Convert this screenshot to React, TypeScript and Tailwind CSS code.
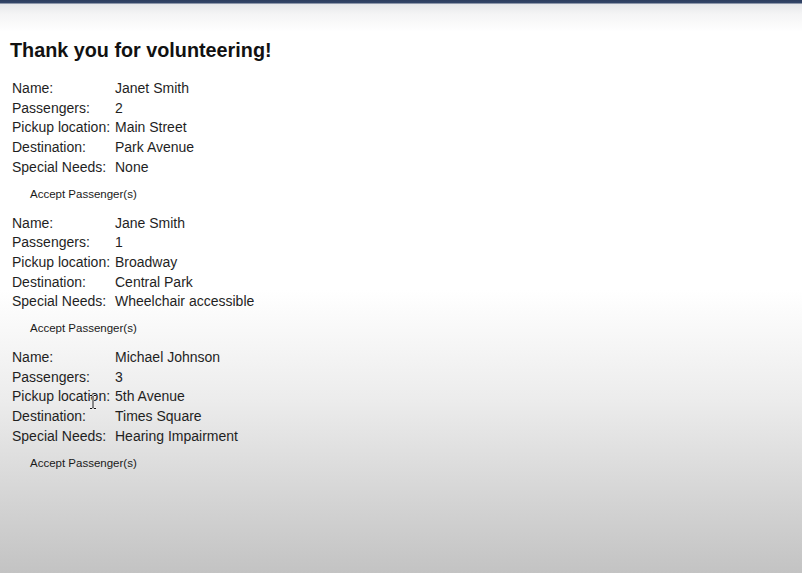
import React from 'react';

type Request = {
  name: string;
  passengers: number;
  pickup: string;
  destination: string;
  needs: string;
};

const requests: Request[] = [
  { name: 'Janet Smith', passengers: 2, pickup: 'Main Street', destination: 'Park Avenue', needs: 'None' },
  { name: 'Jane Smith', passengers: 1, pickup: 'Broadway', destination: 'Central Park', needs: 'Wheelchair accessible' },
  { name: 'Michael Johnson', passengers: 3, pickup: '5th Avenue', destination: 'Times Square', needs: 'Hearing Impairment' },
];

function RequestCard({ req, showCursor }: { req: Request; showCursor?: boolean }) {
  const rows: [string, React.ReactNode][] = [
    ['Name:', req.name],
    ['Passengers:', req.passengers],
    ['Pickup location:', req.pickup],
    ['Destination:', req.destination],
    ['Special Needs:', req.needs],
  ];

  return (
    <div className="mb-[9px]">
      <div className="relative grid grid-cols-[103px_1fr] pl-[2px] text-[14px] leading-[19.7px] text-[#1f1f1f]">
        {rows.map(([label, value]) => (
          <React.Fragment key={label}>
            <div className="whitespace-nowrap">{label}</div>
            <div>{value}</div>
          </React.Fragment>
        ))}
        {/* text cursor over the label */}
        {showCursor && (
          <svg className="absolute left-[78px] top-[46px]" width="10" height="16" viewBox="0 0 10 16">
            <path d="M2 1.5h2l1 1 1-1h2M5 2.5v11M2 14.5h2l1-1 1 1h2" fill="none" stroke="#fff" strokeWidth="2.2" />
            <path d="M2 1.5h2l1 1 1-1h2M5 2.5v11M2 14.5h2l1-1 1 1h2" fill="none" stroke="#111" strokeWidth="1" />
          </svg>
        )}
      </div>
      <button className="ml-[14px] mt-[6px] px-[6px] py-[3px] text-[11.5px] leading-[14px] text-[#1a1a1a]">
        Accept Passenger(s)
      </button>
    </div>
  );
}

export default function App() {
  return (
    <div
      className="min-h-screen w-full bg-[linear-gradient(to_bottom,#2c3d5e_0px,#34466a_3px,#e6e7ea_4px,#f4f4f5_14px,#ffffff_32px,#ffffff_290px,#ececec_400px,#d9d9d9_480px,#c3c3c3_573px)]"
      style={{ fontFamily: '"Liberation Sans", Arial, Helvetica, sans-serif' }}
    >
      <div className="pt-[36px] pl-[10px]">
        <h1 className="text-[19.8px] leading-[28px] font-bold text-[#111]">Thank you for volunteering!</h1>
        <div className="mt-[15px]">
          {requests.map((r, i) => (
            <RequestCard key={r.name} req={r} showCursor={i === 2} />
          ))}
        </div>
      </div>
    </div>
  );
}
